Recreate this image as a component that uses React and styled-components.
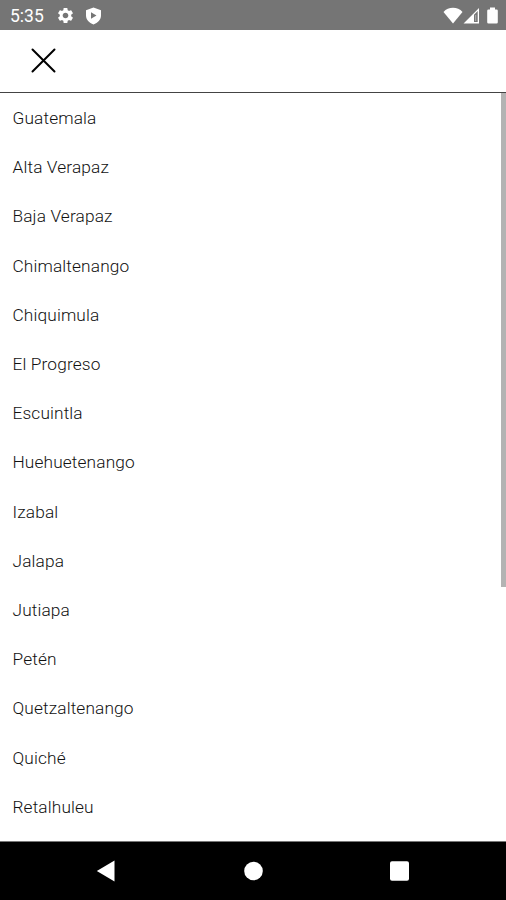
import React from 'react';
import styled, { createGlobalStyle } from 'styled-components';
import { MdSettings } from 'react-icons/md';

const GlobalStyle = createGlobalStyle`
  body {
    margin: 0;
    background: white;
    font-family: Roboto, sans-serif;
  }
`;

const Screen = styled.div`
  display: flex;
  flex-direction: column;
  width: 100%;
  height: 100vh;
  overflow: hidden;
`;

const StatusBar = styled.div`
  display: flex;
  flex: none;
  justify-content: space-between;
  box-sizing: border-box;
  height: 30px;
  padding: 0 8px 0 10px;
  background: #757575;
  color: white;
`;

const StatusGroup = styled.div`
  display: flex;
  align-items: center;
  height: 31px;
`;

const Time = styled.span`
  width: 46px;
  font-size: 17.5px;
  line-height: 32px;
  padding-top: 1px;
`;

const StatusIcon = styled.svg`
  display: block;
  flex: none;
  margin-left: ${props => props.$gap || 0}px;
  fill: white;
`;

const Header = styled.header`
  display: flex;
  flex: none;
  align-items: center;
  box-sizing: border-box;
  height: 63px;
  padding: 0 0 1px 31px;
  border-bottom: 1px solid #444;
`;

const CloseButton = styled.button`
  display: flex;
  padding: 0;
  border: none;
  background: none;
`;

const Content = styled.main`
  display: flex;
  flex: 1;
  justify-content: space-between;
  min-height: 0;
  overflow: hidden;
`;

const List = styled.ul`
  margin: 0;
  padding: 0 0 0 12.5px;
  list-style: none;
`;

const Item = styled.li`
  height: 49.21px;
  color: #111;
  font-size: 17.3px;
  font-weight: 300;
  letter-spacing: 0.13px;
  line-height: 50px;
`;

const ScrollThumb = styled.div`
  width: 5px;
  height: 494px;
  background: #b3b3b3;
`;

const NavBar = styled.nav`
  display: flex;
  flex: none;
  justify-content: space-between;
  align-items: center;
  box-sizing: border-box;
  height: 59px;
  padding: 0 96px;
  border-top: 1px solid #777;
  background: black;
`;

const departments = [
  'Guatemala',
  'Alta Verapaz',
  'Baja Verapaz',
  'Chimaltenango',
  'Chiquimula',
  'El Progreso',
  'Escuintla',
  'Huehuetenango',
  'Izabal',
  'Jalapa',
  'Jutiapa',
  'Petén',
  'Quetzaltenango',
  'Quiché',
  'Retalhuleu',
];

function Status() {
  return (
    <StatusBar>
      <StatusGroup>
        <Time>5:35</Time>
        <MdSettings size={19} />
        <StatusIcon $gap={11} width="15" height="18" viewBox="0 0 15 18">
          <path
            fillRule="evenodd"
            d="M7.5 .5L15 3.3V8.5c0 4-3.2 7.5-7.5 9C3.2 16 0 12.5 0 8.5V3.3zM5 5.3v6.4L10.500 8.500z"
          />
        </StatusIcon>
      </StatusGroup>
      <StatusGroup>
        <StatusIcon width="20" height="17" viewBox="0 0 20 17">
          <path d="M10 16.500L.5 5C3 2.200 6.300.8 10 .8S17 2.200 19.500 5z" />
        </StatusIcon>
        <StatusIcon width="17" height="17" viewBox="0 0 17 17">
          <path fillRule="evenodd" d="M.5 16.500L16 1V16.500zM11 7.700V15H14.700V4z" />
          <path d="M12 8h1.200v6H12z" opacity=".35" />
        </StatusIcon>
        <StatusIcon $gap={7} width="11" height="17" viewBox="0 0 11 17">
          <path d="M3 .5h5v2h1.500q1.300 0 1.300 1.300v11.400q0 1.300-1.300 1.300h-8Q.2 16.500.2 15.200V3.800Q.2 2.500 1.500 2.500H3z" />
        </StatusIcon>
      </StatusGroup>
    </StatusBar>
  );
}

function App() {
  return (
    <Screen>
      <GlobalStyle />
      <Status />
      <Header>
        <CloseButton aria-label="Close">
          <svg width="25" height="25" viewBox="0 0 25 25">
            <path d="M1.500 1.500l22 22M23.500 1.500l-22 22" stroke="black" strokeWidth="2" strokeLinecap="round" />
          </svg>
        </CloseButton>
      </Header>
      <Content>
        <List>
          {departments.map(name => <Item key={name}>{name}</Item>)}
        </List>
        <ScrollThumb />
      </Content>
      <NavBar>
        <svg width="19" height="22" viewBox="0 0 19 22">
          <path d="M.8 11L18.500.5v21z" fill="white" />
        </svg>
        <svg width="20" height="20" viewBox="0 0 20 20">
          <circle cx="10.500" cy="10" r="9.300" fill="white" />
        </svg>
        <svg width="20" height="20" viewBox="0 0 20 20">
          <rect x="0" y=".3" width="19" height="19.500" rx="2" fill="white" />
        </svg>
      </NavBar>
    </Screen>
  );
}

export default App;
